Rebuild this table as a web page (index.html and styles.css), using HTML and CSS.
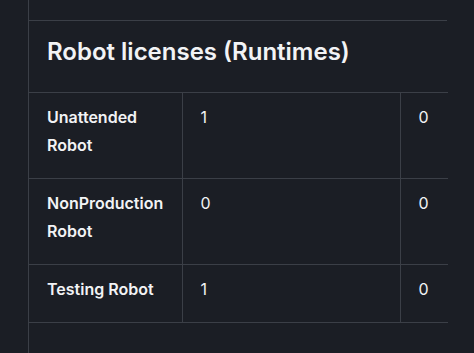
FILE: index.html
```html
<!DOCTYPE html>
<html>
<head>
<meta charset="utf-8">
<link rel="stylesheet" href="styles.css">
</head>
<body>
<div class="page">
  <section class="card">
    <h2 class="title">Robot licenses (Runtimes)</h2>
    <table class="grid">
      <colgroup>
        <col class="c1"><col class="c2"><col class="c3">
      </colgroup>
      <tbody>
        <tr>
          <th>Unattended Robot</th>
          <td>1</td>
          <td class="last">0</td>
        </tr>
        <tr>
          <th>NonProduction Robot</th>
          <td>0</td>
          <td class="last">0</td>
        </tr>
        <tr>
          <th>Testing Robot</th>
          <td>1</td>
          <td class="last">0</td>
        </tr>
      </tbody>
    </table>
  </section>
</div>
</body>
</html>
```
FILE: styles.css
```css
html, body {
  margin: 0;
  padding: 0;
  background: #1b1e25;
  height: 100%;
  overflow: hidden;
}
body {
  font-family: Inter, "Noto Sans", sans-serif;
  color: #f2f3f5;
}
.page {
  margin-left: 28px;
  width: 419px;
  height: 353px;
  box-sizing: border-box;
  border-left: 1px solid #3b3f47;
  padding-top: 20px;
}
.card {
  border-top: 1px solid #3b3f47;
}
.title {
  margin: 0;
  padding: 17px 18px 26px;
  font-size: 24px;
  line-height: 28px;
  font-weight: 600;
  letter-spacing: 0;
}
.grid {
  width: 419px;
  border-collapse: collapse;
  table-layout: fixed;
}
.c1 { width: 153px; }
.c2 { width: 218px; }
.c3 { width: 48px; }
.grid th,
.grid td {
  border-top: 1px solid #3b3f47;
  border-bottom: 1px solid #3b3f47;
  border-right: 1px solid #3b3f47;
  padding: 10px 18px 19px;
  font-size: 16px;
  line-height: 28px;
  text-align: left;
  vertical-align: top;
}
.grid th {
  font-weight: 600;
}
.grid td {
  font-weight: 400;
}
.grid .last {
  border-right: none;
  padding-left: 18px;
  padding-right: 0;
}
```
